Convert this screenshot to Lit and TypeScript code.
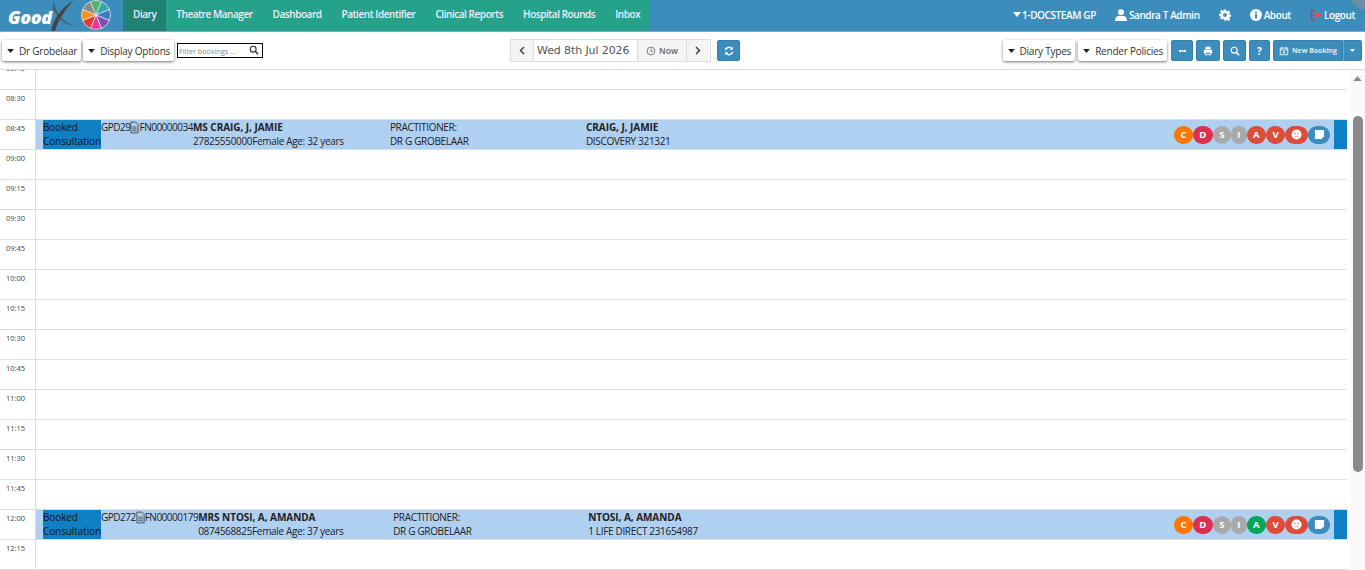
import { LitElement, html, css, svg } from 'lit';
import { customElement } from 'lit/decorators.js';

interface Booking {
  ref: string;
  file: string;
  name: string;
  contact: string;
  gender: string;
  member: string;
  scheme: string;
  patientWidth: number;
  practWidth: number;
  authColor: string;
}

const NAV = ['Diary', 'Theatre Manager', 'Dashboard', 'Patient Identifier', 'Clinical Reports', 'Hospital Rounds', 'Inbox'];

const TIMES = ['08:15', '08:30', '08:45', '09:00', '09:15', '09:30', '09:45', '10:00', '10:15', '10:30', '10:45', '11:00', '11:15', '11:30', '11:45', '12:00', '12:15'];

const BOOKINGS: Record<string, Booking> = {
  '08:45': {
    ref: 'GPD29',
    file: 'FN00000034',
    name: 'MS CRAIG, J, JAMIE',
    contact: '27825550000',
    gender: 'Female Age: 32 years',
    member: 'CRAIG, J, JAMIE',
    scheme: 'DISCOVERY 321321',
    patientWidth: 197,
    practWidth: 196,
    authColor: 'red',
  },
  '12:00': {
    ref: 'GPD272',
    file: 'FN00000179',
    name: 'MRS NTOSI, A, AMANDA',
    contact: '0874568825',
    gender: 'Female Age: 37 years',
    member: 'NTOSI, A, AMANDA',
    scheme: '1 LIFE DIRECT 231654987',
    patientWidth: 195,
    practWidth: 195,
    authColor: 'green',
  },
};

// colours of the logo wheel, clockwise, green sits at the top
const WHEEL = ['#8a8a8a', '#4fb56c', '#2fa7a8', '#3f78c6', '#7a4fb5', '#e8389a', '#e5383b', '#f7931e'];

const caret = html`<svg class="caret" viewBox="0 0 10 6"><path d="M0 0h10L5 6z" /></svg>`;

function wheel() {
  const cx = 15;
  const cy = 15;
  const r = 14.5;
  const step = 45;
  return html`<svg class="wheel" viewBox="0 0 30 30">
    ${WHEEL.map((color, i) => {
      const a0 = ((i * step - 157.5) * Math.PI) / 180;
      const a1 = (((i + 1) * step - 157.5) * Math.PI) / 180;
      const d = `M${cx} ${cy}L${cx + r * Math.cos(a0)} ${cy + r * Math.sin(a0)}A${r} ${r} 0 0 1 ${cx + r * Math.cos(a1)} ${cy + r * Math.sin(a1)}Z`;
      return svg`<path d=${d} fill=${color} stroke="#e4e4e4" stroke-width=".8" />`;
    })}
    <circle cx="15" cy="15" r="1.800" fill="#d8d8d8" />
  </svg>`;
}

const icons = {
  user: html`<svg class="ico" viewBox="0 0 12 12"><circle cx="6" cy="3.200" r="3" fill="#fff" /><path d="M0 12c0-3.500 2-5 3.500-5h5c1.500 0 3.500 1.500 3.500 5z" fill="#fff" /></svg>`,
  gear: html`<svg class="ico" viewBox="0 0 24 24"><path fill="#fff" fill-rule="evenodd" d="M10 1h4l.7 3.200 2 .8 2.800-1.800 2.800 2.800-1.800 2.800.8 2 3.200.7v4l-3.200.7-.8 2 1.800 2.800-2.800 2.800-2.800-1.800-2 .8L14 23h-4l-.7-3.200-2-.8-2.800 1.800-2.800-2.800 1.800-2.800-.8-2L0 14v-4l3.200-.7.8-2L2.200 4.500 5 1.700 7.800 3.500l2-.8zM12 8a4 4 0 1 0 0 8 4 4 0 0 0 0-8z" /></svg>`,
  info: html`<svg class="ico" viewBox="0 0 12 12"><circle cx="6" cy="6" r="6" fill="#fff" /><rect x="5" y="5" width="2" height="4.500" fill="#3c8dbc" /><rect x="5" y="2.500" width="2" height="1.700" fill="#3c8dbc" /></svg>`,
  logout: html`<svg class="ico" viewBox="0 0 12 12"><path d="M4.500 1.500H1.500v9h3" fill="none" stroke="#b5403f" stroke-width="1.300" /><path d="M4 4.500h3.500V2L12 6l-4.500 4V7.500H4z" fill="#d9534f" /></svg>`,
  search: html`<svg class="ico-s" viewBox="0 0 12 12"><circle cx="5" cy="5" r="3.500" fill="none" stroke="currentColor" stroke-width="1.400" /><path d="M7.500 7.500L11 11" stroke="currentColor" stroke-width="1.800" /></svg>`,
  clock: html`<svg class="ico-s" viewBox="0 0 12 12"><circle cx="6" cy="6" r="4.700" fill="none" stroke="currentColor" stroke-width="1" /><path d="M6 3v3.300h2.500" fill="none" stroke="currentColor" /></svg>`,
  refresh: html`<svg class="ico-s" viewBox="0 0 12 12"><path d="M1.500 5a4.500 4.500 0 0 1 8-1.500M10.500 7a4.500 4.500 0 0 1-8 1.500" fill="none" stroke="#fff" stroke-width="1.800" /><path d="M10.500 1v3.500H7zM1.500 11V7.500H5z" fill="#fff" /></svg>`,
  print: html`<svg class="ico-s" viewBox="0 0 12 12"><path fill="#fff" fill-rule="evenodd" d="M3 1h6v3H3zM1 4.500h10V9H9.500v2h-7V9H1zM3.500 8v2h5V8z" /></svg>`,
  calendar: html`<svg class="ico-s" viewBox="0 0 12 12"><path fill="none" stroke="#fff" d="M1.500 2.500h9v8h-9zM1.500 4.800h9M6 6v3.500M4.300 7.700h3.400" /><path stroke="#fff" d="M3.500 1v2M8.500 1v2" /></svg>`,
  more: html`<svg class="dots" viewBox="0 0 7 2"><path fill="#fff" d="M0 0h2v2H0zM2.500 0h2v2h-2zM5 0h2v2H5z" /></svg>`,
  file: html`<svg class="file" viewBox="0 0 10 13"><path d="M1 .5h5.500L9 3v9.500H1z" fill="none" stroke="#444" /><path d="M2.500 6h5M2.500 8h5M2.500 10h5" stroke="#333" stroke-width=".8" /></svg>`,
  face: html`<svg class="face" viewBox="0 0 12 12"><circle cx="6" cy="6" r="5.500" fill="#fff" /><circle cx="4.200" cy="4.800" r=".7" fill="#dd4b39" /><circle cx="7.800" cy="4.800" r=".7" fill="#dd4b39" /><path d="M3.800 8.600c1-1 3.400-1 4.400 0" fill="none" stroke="#dd4b39" stroke-width=".7" /></svg>`,
  note: html`<svg class="note" viewBox="0 0 12 12"><path d="M1 1h10v7l-3 3H1z" fill="#fff" /></svg>`,
};

@customElement('app-root')
export class AppRoot extends LitElement {
  static styles = css`
    :host {
      display: block;
      width: 1365px;
      height: 570px;
      overflow: hidden;
      position: relative;
      background: #fff;
      font-family: 'Open Sans', 'Noto Sans', sans-serif;
      color: #333;
    }
    .topbar {
      display: flex;
      height: 32px;
      box-sizing: border-box;
      background: #3c8dbc;
      border-bottom: 1px solid #7ca6d2;
      color: #fff;
    }
    .logo {
      width: 123px;
      flex: none;
      display: flex;
      align-items: center;
      position: relative;
    }
    .logo-word {
      font: italic 800 18px 'Open Sans', sans-serif;
      margin: 2px 0 0 8px;
      color: #fff;
      letter-spacing: -0.4px;
    }
    .logo-x {
      position: absolute;
      left: 50px;
      top: 0;
      width: 26px;
      height: 31px;
    }
    .wheel {
      position: absolute;
      left: 81px;
      top: 0;
      width: 30px;
      height: 30px;
    }
    .nav {
      display: flex;
      background: #25a28a;
    }
    .nav a {
      padding: 0 10px;
      line-height: 29px;
      font-size: 10px;
      font-weight: 600;
      color: #eef;
      letter-spacing: -0.45px;
    }
    .nav a.active {
      background: #1f8272;
    }
    .user {
      margin-left: auto;
      display: flex;
      align-items: center;
      gap: 19px;
      padding: 0 10px 2px 0;
      font-size: 10px;
      font-weight: 600;
      letter-spacing: -0.4px;
    }
    .user span {
      display: flex;
      align-items: center;
      gap: 2px;
    }
    .user .caret {
      fill: #fff;
      width: 8px;
      height: 5px;
      margin-right: -1px;
    }
    .ico {
      width: 12px;
      height: 12px;
    }
    .blob {
      position: absolute;
      right: -23px;
      top: -30px;
      width: 40px;
      height: 40px;
      border-radius: 50%;
      background: #6c8ea6;
    }
    .toolbar {
      display: flex;
      align-items: flex-start;
      height: 37px;
      box-sizing: border-box;
      padding-top: 8px;
      font-size: 10px;
    }
    .left {
      width: 510px;
      flex: none;
      display: flex;
      align-items: center;
      padding-left: 2px;
      gap: 2px;
      box-sizing: border-box;
    }
    .drop {
      display: flex;
      align-items: center;
      height: 21px;
      box-sizing: border-box;
      background: #fff;
      padding: 0 4px;
      gap: 5px;
      color: #333;
      font-size: 10px;
      letter-spacing: -0.22px;
      white-space: nowrap;
      box-shadow: 0 1px 3px rgba(0, 0, 0, 0.55);
      border-radius: 2px;
    }
    .drop .caret {
      width: 7px;
      height: 4px;
      fill: #222;
      margin-left: 1px;
    }
    .filter {
      margin-left: 1px;
      width: 86px;
      height: 15px;
      box-sizing: border-box;
      border: 1px solid #000;
      display: flex;
      align-items: center;
      justify-content: space-between;
      padding: 0 3px 0 1px;
      font-size: 7.200px;
      color: #888;
      white-space: nowrap;
    }
    .filter .ico-s {
      color: #333;
      margin-top: -2px;
    }
    .ico-s {
      width: 10px;
      height: 10px;
      flex: none;
    }
    .date-group {
      display: flex;
      height: 23px;
      margin-top: -1px;
      border: 1px solid #ddd;
      box-sizing: border-box;
      width: 201px;
    }
    .date-btn {
      display: flex;
      align-items: center;
      justify-content: center;
      background: #f4f4f4;
      color: #444;
      gap: 3px;
      font-size: 8.500px;
      font-weight: 600;
    }
    .date-btn.arrow {
      width: 22px;
      flex: none;
    }
    .date-btn.now {
      width: 48px;
      border-left: 1px solid #ddd;
      border-right: 1px solid #ddd;
      color: #666;
    }
    .date-btn svg.chev {
      width: 6px;
      height: 9px;
    }
    .date-val {
      width: 104px;
      flex: none;
      box-sizing: border-box;
      border-left: 1px solid #ddd;
      background: #fff;
      line-height: 21px;
      padding-left: 3px;
      font-family: 'DejaVu Sans', sans-serif;
      font-size: 11px;
      letter-spacing: -0.1px;
      color: #555;
      white-space: nowrap;
    }
    .blue {
      display: flex;
      align-items: center;
      justify-content: center;
      height: 21px;
      background: #3c8dbc;
      border: 1px solid #367fa9;
      box-sizing: border-box;
      border-radius: 2px;
      color: #fff;
      font-size: 10px;
      font-weight: 700;
      margin-left: 3px;
    }
    .w-more {
      width: 22px;
      margin-left: 4px;
    }
    .w-print {
      width: 24px;
    }
    .w-search {
      width: 23px;
    }
    .w-help {
      width: 21px;
    }
    .dots {
      width: 7px;
      height: 2px;
    }
    .refresh {
      width: 23px;
      margin-left: 6px;
    }
    .right {
      margin-left: auto;
      display: flex;
      align-items: center;
      padding-right: 3px;
    }
    .right .drop + .drop {
      margin-left: 3px;
    }
    .new-booking {
      display: flex;
      margin-left: 3px;
    }
    .new-main {
      width: 70px;
      gap: 3px;
      font-size: 7px;
      letter-spacing: -0.1px;
      color: #dfe9f0;
      border-radius: 2px 0 0 2px;
      white-space: nowrap;
      margin-left: 0;
    }
    .new-caret {
      width: 19px;
      border-radius: 0 2px 2px 0;
      border-left: 1px solid #6aa7cb;
      margin-left: 0;
    }
    .new-caret svg {
      width: 5px;
      height: 3px;
      fill: #fff;
    }
    .gridwrap {
      position: relative;
      height: 501px;
      border-top: 1px solid #ddd;
      overflow: hidden;
    }
    .rows {
      margin-top: -10px;
      width: 1347px;
    }
    .row {
      display: flex;
      height: 30px;
      box-sizing: border-box;
      border-bottom: 1px solid #ddd;
    }
    .time {
      width: 36px;
      flex: none;
      box-sizing: border-box;
      border-right: 1px solid #ddd;
      font-size: 7.500px;
      color: #444;
      padding: 3px 0 0 6px;
    }
    .slot {
      flex: 1;
      min-width: 0;
    }
    .booking {
      height: 29px;
      background: #b0d0f2;
      display: flex;
      padding-left: 7px;
      font-size: 10px;
      line-height: 13.500px;
      color: #222;
      white-space: nowrap;
    }
    .status {
      width: 58px;
      flex: none;
      background: #1080c4;
      color: #111;
      padding-top: 1px;
      letter-spacing: -0.1px;
    }
    .ref {
      flex: none;
      padding-top: 1px;
      display: flex;
      align-items: flex-start;
      letter-spacing: -0.5px;
    }
    .file {
      width: 9px;
      height: 13px;
    }
    .col {
      flex: none;
      padding-top: 1px;
      letter-spacing: -0.33px;
    }
    b {
      font-weight: 700;
      letter-spacing: -0.05px;
    }
    .badges {
      margin-left: auto;
      display: flex;
      align-items: center;
      height: 100%;
      margin-right: 4px;
    }
    .badge {
      display: flex;
      align-items: center;
      justify-content: center;
      height: 18px;
      padding: 0 6.400px;
      border-radius: 9px;
      color: #fff;
      font-size: 9.500px;
      font-weight: 700;
      background: #a9a9a9;
    }
    .badge.orange {
      background: #ff7701;
    }
    .badge.pink {
      background: #dc3050;
    }
    .badge.red {
      background: #dd4b39;
    }
    .badge.green {
      background: #00a65a;
    }
    .badge.wide {
      width: 23px;
      padding: 0;
      box-sizing: border-box;
    }
    .badge.note-b {
      width: 22px;
      padding: 0;
      box-sizing: border-box;
      background: #3c8dbc;
    }
    .face {
      width: 11px;
      height: 11px;
      flex: none;
    }
    .note {
      width: 11px;
      height: 11px;
      flex: none;
    }
    .end {
      width: 13px;
      flex: none;
      background: #1080c4;
    }
    .scrollbar {
      position: absolute;
      top: 0;
      right: 0;
      width: 15px;
      bottom: 0;
      background: #fafafa;
    }
    .scrollbar .up {
      position: absolute;
      left: 3px;
      top: 6px;
      width: 9px;
      height: 5px;
      fill: #8a8a8a;
    }
    .thumb {
      position: absolute;
      left: 3px;
      width: 10px;
      top: 46px;
      height: 356px;
      border-radius: 5px;
      background: #8a8a8a;
    }
  `;

  renderBooking(b: Booking) {
    return html`<div class="booking">
      <div class="status">Booked<br />Consultation</div>
      <div class="ref">${b.ref}${icons.file}${b.file}</div>
      <div class="col" style="width:${b.patientWidth}px">
        <b>${b.name}</b><br />${b.contact}${b.gender}
      </div>
      <div class="col" style="width:${b.practWidth}px">PRACTITIONER:<br />DR G GROBELAAR</div>
      <div class="col"><b>${b.member}</b><br />${b.scheme}</div>
      <div class="badges">
        <span class="badge orange">C</span>
        <span class="badge pink">D</span>
        <span class="badge">S</span>
        <span class="badge">I</span>
        <span class="badge ${b.authColor}">A</span>
        <span class="badge red">V</span>
        <span class="badge red wide">${icons.face}</span>
        <span class="badge note-b">${icons.note}</span>
      </div>
      <div class="end"></div>
    </div>`;
  }

  render() {
    return html`
      <div class="topbar">
        <div class="logo">
          <span class="logo-word">Good</span>
          <svg class="logo-x" viewBox="0 0 26 31">
            <path d="M3 0c2 8 5 14 9 18 4 4 8 7 13 8-6 0-11-3-15-7L3 10z" fill="#555" opacity=".85" />
            <path d="M1 31c2-9 6-16 11-21 3-3 7-7 12-10-4 4-8 9-11 14-3 4-6 10-8 17z" fill="#444" />
          </svg>
          ${wheel()}
        </div>
        <nav class="nav">
          ${NAV.map((item, i) => html`<a class=${i === 0 ? 'active' : ''}>${item}</a>`)}
        </nav>
        <div class="user">
          <span>${caret}1-DOCSTEAM GP</span>
          <span>${icons.user}Sandra T Admin</span>
          <span>${icons.gear}</span>
          <span>${icons.info}About</span>
          <span>${icons.logout}Logout</span>
        </div>
      </div>
      <div class="blob"></div>

      <div class="toolbar">
        <div class="left">
          <div class="drop">${caret}Dr Grobelaar</div>
          <div class="drop">${caret}Display Options</div>
          <div class="filter">Filter bookings ...${icons.search}</div>
        </div>
        <div class="date-group">
          <div class="date-btn arrow">
            <svg class="chev" viewBox="0 0 6 9"><path d="M5 1L1.500 4.500 5 8" fill="none" stroke="#444" stroke-width="1.500" /></svg>
          </div>
          <div class="date-val">Wed 8th Jul 2026</div>
          <div class="date-btn now">${icons.clock}Now</div>
          <div class="date-btn arrow">
            <svg class="chev" viewBox="0 0 6 9"><path d="M1 1l3.500 3.500L1 8" fill="none" stroke="#444" stroke-width="1.500" /></svg>
          </div>
        </div>
        <div class="blue refresh">${icons.refresh}</div>
        <div class="right">
          <div class="drop">${caret}Diary Types</div>
          <div class="drop">${caret}Render Policies</div>
          <div class="blue w-more">${icons.more}</div>
          <div class="blue w-print">${icons.print}</div>
          <div class="blue w-search">${icons.search}</div>
          <div class="blue w-help">?</div>
          <div class="new-booking">
            <div class="blue new-main">${icons.calendar}New Booking</div>
            <div class="blue new-caret"><svg viewBox="0 0 10 6"><path d="M0 0h10L5 6z" /></svg></div>
          </div>
        </div>
      </div>

      <div class="gridwrap">
        <div class="rows">
          ${TIMES.map((t) => {
            const b = BOOKINGS[t];
            return html`<div class="row">
              <div class="time">${t}</div>
              <div class="slot">${b ? this.renderBooking(b) : ''}</div>
            </div>`;
          })}
        </div>
        <div class="scrollbar">
          <svg class="up" viewBox="0 0 10 6"><path d="M5 0l5 6H0z" /></svg>
          <div class="thumb"></div>
        </div>
      </div>
    `;
  }
}
